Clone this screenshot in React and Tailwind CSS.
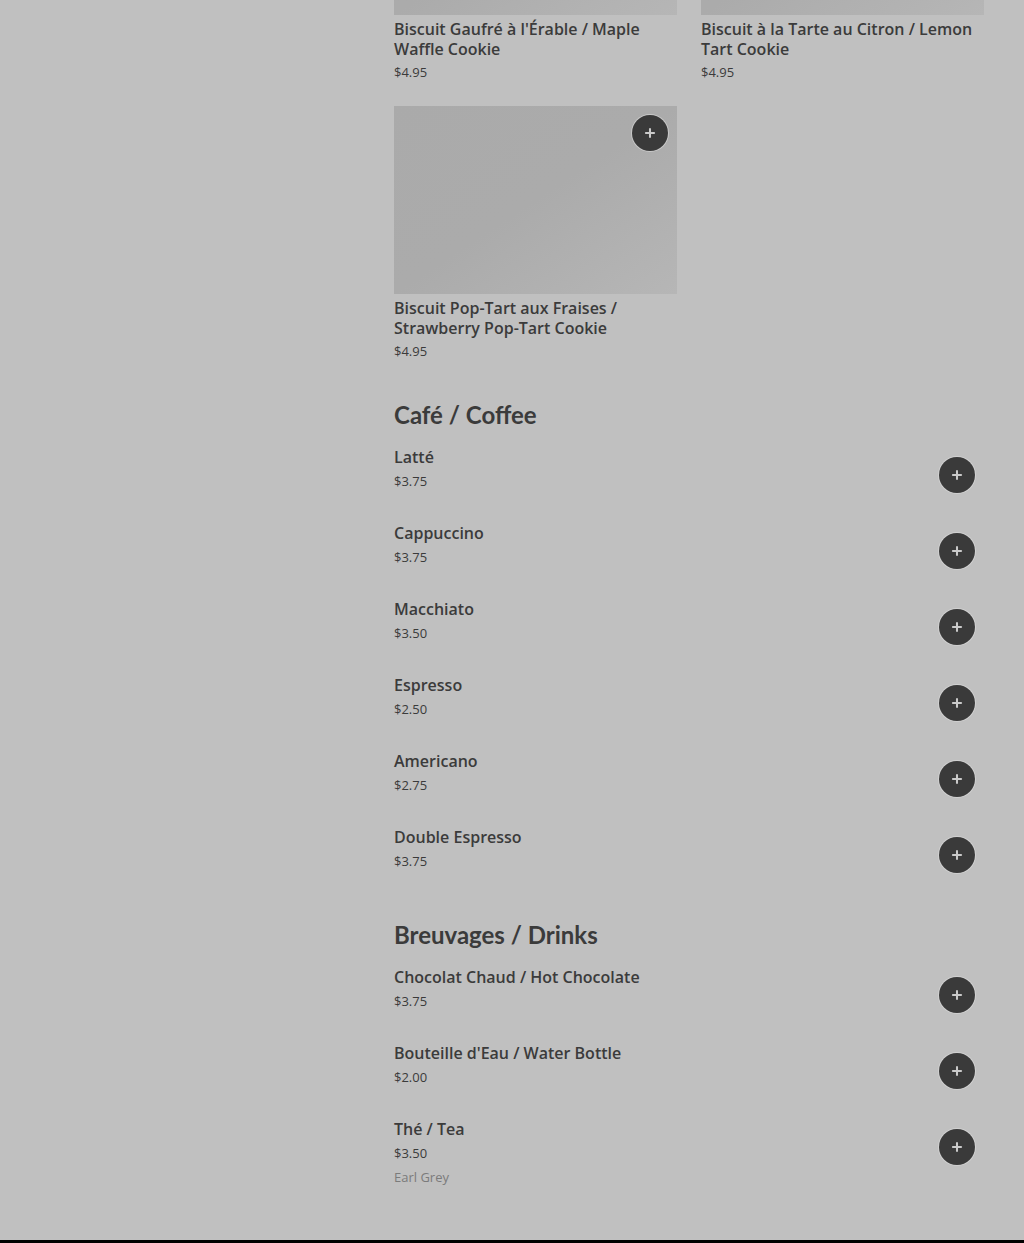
import { Plus } from 'lucide-react';

const cookies = [
  { name: "Biscuit Gaufré à l'Érable / Maple Waffle Cookie", price: '$4.95' },
  { name: 'Biscuit à la Tarte au Citron / Lemon Tart Cookie', price: '$4.95' },
  { name: 'Biscuit Pop-Tart aux Fraises / Strawberry Pop-Tart Cookie', price: '$4.95' },
];

const coffee = [
  { name: 'Latté', price: '$3.75' },
  { name: 'Cappuccino', price: '$3.75' },
  { name: 'Macchiato', price: '$3.50' },
  { name: 'Espresso', price: '$2.50' },
  { name: 'Americano', price: '$2.75' },
  { name: 'Double Espresso', price: '$3.75' },
];

const drinks = [
  { name: 'Chocolat Chaud / Hot Chocolate', price: '$3.75' },
  { name: "Bouteille d'Eau / Water Bottle", price: '$2.00' },
  { name: 'Thé / Tea', price: '$3.50', note: 'Earl Grey' },
];

const AddButton = ({ className = '' }) => (
  <button
    className={`w-9 h-9 rounded-full bg-[#3a3a3a] text-[#cacaca] flex items-center justify-center shadow-[0_0_0_1px_rgba(220,220,220,0.6)] ${className}`}
  >
    <Plus size={14} strokeWidth={3.5} />
  </button>
);

const CookieCard = ({ item }) => (
  <div className="flex flex-col">
    <div className="relative h-[188px] bg-gradient-to-br from-[#aaaaaa] via-[#ababab] to-[#b6b6b6]">
      <AddButton className="absolute top-[9px] right-[9px]" />
    </div>
    <p className="mt-[4px] text-[16px] leading-5 font-semibold text-[#3b3b3b]">{item.name}</p>
    <p className="mt-[3px] text-[13px] leading-5 text-[#3b3b3b]">{item.price}</p>
  </div>
);

const MenuRow = ({ item }) => (
  <div className="h-[76px] flex items-start justify-between">
    <div className="flex flex-col gap-1">
      <p className="text-[16px] leading-5 font-semibold text-[#3b3b3b]">{item.name}</p>
      <p className="text-[13px] leading-5 text-[#3b3b3b]">{item.price}</p>
      {item.note && <p className="text-[13px] leading-5 text-[#7b7b7b]">{item.note}</p>}
    </div>
    <AddButton className="mt-[10px] mr-[9px]" />
  </div>
);

const SectionTitle = ({ children }) => (
  <h2 className="text-[24px] leading-8 font-bold text-[#3b3b3b] font-['Lato',sans-serif]">
    {children}
  </h2>
);

export default function App() {
  return (
    <div className="h-[1243px] overflow-hidden bg-[#c0c0c0] font-['Open_Sans',sans-serif] flex flex-col">
      <div className="flex -mt-[173px]">
        {/* Left sidebar (empty) */}
        <aside className="w-[394px] shrink-0" />

        {/* Menu */}
        <main className="w-[590px]">
          <div className="grid grid-cols-2 gap-x-6 gap-y-6">
            {cookies.map((c) => (
              <CookieCard key={c.name} item={c} />
            ))}
          </div>

          <section className="mt-[38px]">
            <SectionTitle>Café / Coffee</SectionTitle>
            <div className="mt-[16px] flex flex-col">
              {coffee.map((c) => (
                <MenuRow key={c.name} item={c} />
              ))}
            </div>
          </section>

          <section className="mt-[16px]">
            <SectionTitle>Breuvages / Drinks</SectionTitle>
            <div className="mt-[16px] flex flex-col">
              {drinks.map((c) => (
                <MenuRow key={c.name} item={c} />
              ))}
            </div>
          </section>
        </main>
      </div>
      <div className="mt-auto h-[3px] bg-black shrink-0" />
    </div>
  );
}
